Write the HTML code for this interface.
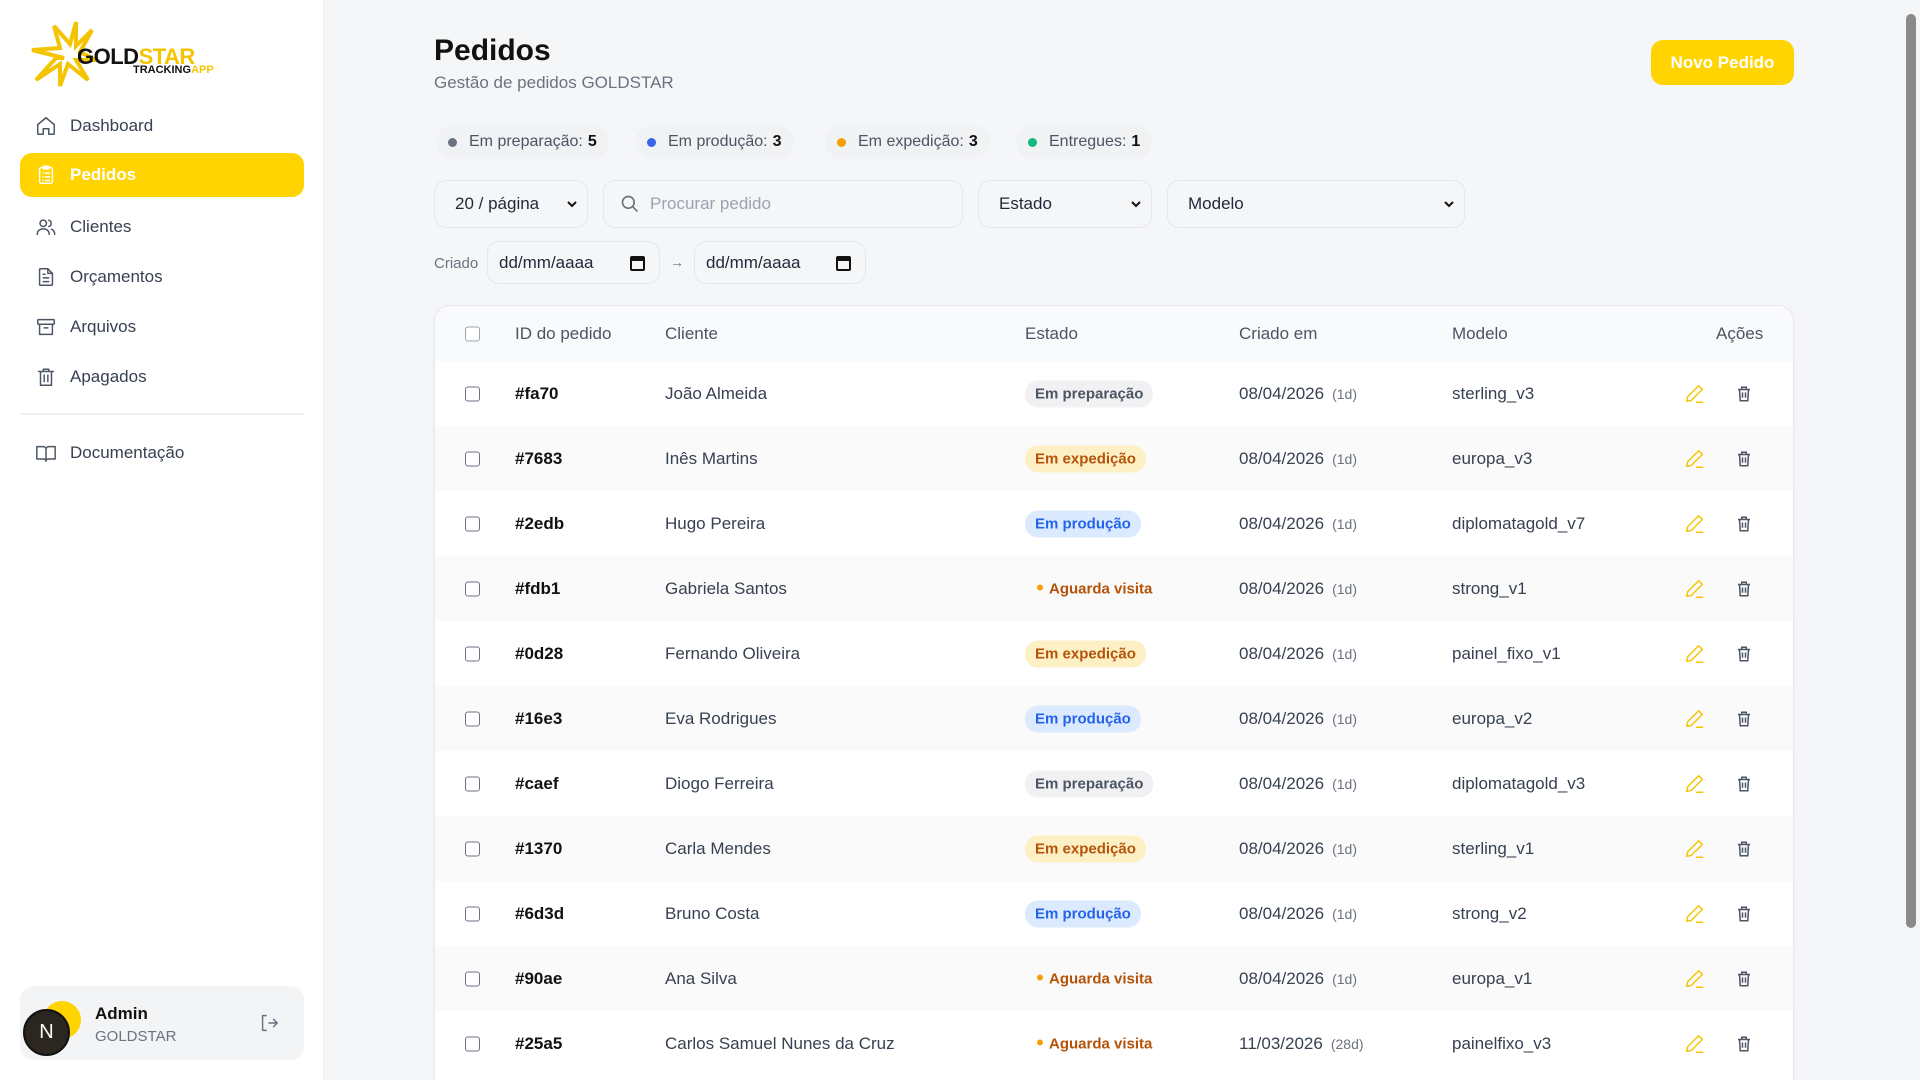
<!DOCTYPE html>
<html style="width:1920px;height:1080px;overflow:hidden"><head><meta charset="utf-8">
<style>
*{box-sizing:border-box;margin:0;padding:0}
html,body{overflow:hidden}
body{width:1920px;height:1080px;overflow:hidden;background:#f5f6f8;font-family:"Liberation Sans",sans-serif;color:#1f2937;position:relative}
.sb{position:absolute;left:0;top:0;width:324px;height:1080px;background:#fff;border-right:1px solid #eceef1}
.nav{position:absolute;left:20px;width:284px;height:44px;display:flex;align-items:center;padding-left:15px;font-size:17px;color:#374151;border-radius:12px}
.nav svg{width:22px;height:22px;margin-right:13px;fill:none;stroke:#4b5563;stroke-width:1.6;stroke-linecap:round;stroke-linejoin:round}
.nav.act{background:#ffd400;color:#fff;font-weight:bold}
.nav.act svg{stroke:#fff}
.abs{position:absolute}
.pill{position:absolute;top:125px;height:34px;border-radius:17px;background:#f1f2f4;display:flex;align-items:center;padding:0 12px;font-size:16px;color:#4b5563;white-space:nowrap}
.pill i{width:9px;height:9px;border-radius:50%;display:inline-block;margin-right:12px}
.pill b{color:#111;margin-left:5px}
.box{position:absolute;border:1px solid #e5e7eb;border-radius:12px;background:#f5f6f8;display:flex;align-items:center;font-size:17px;color:#1f2937}
.chev{position:absolute;right:10px;top:50%;margin-top:-5px;width:10px;height:10px}
.card{position:absolute;left:434px;top:305px;width:1360px;height:775px;background:#fff;border:1px solid #e8e9ec;border-bottom:none;border-radius:16px 16px 0 0;overflow:hidden;box-shadow:0 1px 3px rgba(0,0,0,.05)}
.row{position:absolute;left:0;width:1360px;height:65px;font-size:17px;color:#374151}
.row>*{position:absolute;top:50%;transform:translateY(-50%);white-space:nowrap}
.cb{left:30px;width:15px;height:15px;border:1.5px solid #6b7280;border-radius:3px;background:#fff}
.id{left:80px;font-weight:bold;color:#111}
.cl{left:230px}
.st{left:590px;font-size:15px;font-weight:bold;padding:5px 10px;border-radius:13px}
.prep{background:#f1f1f3;color:#4b5563}
.exp{background:#fdf0c4;color:#b45309}
.prod{background:#dbeafe;color:#2563eb}
.ag{color:#b45309;padding-left:12px}
.ag:before{content:"";display:inline-block;width:6px;height:6px;border-radius:50%;background:#f59e0b;margin-right:6px;vertical-align:middle;position:relative;top:-2px}
.dt{left:804px}
.dt span{color:#6b7280;font-size:14px;margin-left:8px}
.md{left:1017px}
.ed{left:1249px;width:22px;height:22px}
.tr{left:1300px;width:18px;height:18px}
</style></head><body>
<div class="sb">
  <svg class="abs" style="left:30px;top:20px" width="70" height="68" viewBox="0 0 70 68">
    <path d="M34 38 L2 30 L30 28 L24 6 L40 24 L46 2 L46 26 L62 10 L50 32 L66 40 L46 40 L58 60 L38 44 L30 66 L30 44 L6 60 L26 38 Z" fill="none" stroke="#f5c400" stroke-width="4" stroke-linejoin="miter"/>
  </svg>
  <div class="abs" style="left:77px;top:44px;font-size:22px;font-weight:bold;letter-spacing:-0.5px"><span style="color:#111">GOLD</span><span style="color:#f5c400">STAR</span></div>
  <div class="abs" style="left:133px;top:64px;font-size:11px;font-weight:bold"><span style="color:#111">TRACKING</span><span style="color:#f5c400">APP</span></div>

  <div class="nav" style="top:104px"><svg viewBox="0 0 24 24"><path d="M3 10.5 12 3l9 7.5V20a1 1 0 0 1-1 1h-5v-6h-6v6H4a1 1 0 0 1-1-1z"/></svg>Dashboard</div>
  <div class="nav act" style="top:153px"><svg viewBox="0 0 24 24"><rect x="5" y="4" width="14" height="17" rx="2"/><rect x="9" y="2.5" width="6" height="3" rx="1"/><path d="M8.5 10h.01M11 10h5M8.5 14h.01M11 14h5M8.5 18h.01M11 18h5"/></svg>Pedidos</div>
  <div class="nav" style="top:205px"><svg viewBox="0 0 24 24"><circle cx="9" cy="8" r="3.5"/><path d="M2.5 20c0-4 3-6 6.5-6s6.5 2 6.5 6"/><path d="M15 4.6a3.5 3.5 0 0 1 0 6.8M18 14.5c2 .8 3.5 2.6 3.5 5.5"/></svg>Clientes</div>
  <div class="nav" style="top:255px"><svg viewBox="0 0 24 24"><path d="M14 3H6a1 1 0 0 0-1 1v16a1 1 0 0 0 1 1h12a1 1 0 0 0 1-1V8z"/><path d="M14 3v5h5M9 13h6M9 17h6M9 9h2"/></svg>Orçamentos</div>
  <div class="nav" style="top:305px"><svg viewBox="0 0 24 24"><rect x="3" y="4" width="18" height="5" rx="1"/><path d="M5 9v11h14V9M10 13h4"/></svg>Arquivos</div>
  <div class="nav" style="top:355px"><svg viewBox="0 0 24 24"><path d="M4 6h16M9 6V3.5h6V6M6 6v15h12V6M10 10v7M14 10v7"/></svg>Apagados</div>
  <div class="abs" style="left:20px;top:413px;width:284px;height:2px;background:#eef0f2"></div>
  <div class="nav" style="top:431px"><svg viewBox="0 0 24 24"><path d="M2 5h7a3 3 0 0 1 3 3v13a2.5 2.5 0 0 0-2.5-2.5H2zM22 5h-7a3 3 0 0 0-3 3v13a2.5 2.5 0 0 1 2.5-2.5H22z"/></svg>Documentação</div>

  <div class="abs" style="left:20px;top:986px;width:284px;height:74px;background:#f3f4f6;border-radius:14px"></div>
  <div class="abs" style="left:43px;top:1001px;width:38px;height:38px;border-radius:50%;background:#ffd400"></div>
  <div class="abs" style="left:23px;top:1009px;width:47px;height:47px;border-radius:50%;background:#2b2620;border:2px solid #111;color:#fff;font-size:20px;display:flex;align-items:center;justify-content:center">N</div>
  <div class="abs" style="left:95px;top:1004px;font-size:17px;font-weight:bold;color:#111">Admin</div>
  <div class="abs" style="left:95px;top:1028px;font-size:15px;color:#6b7280">GOLDSTAR</div>
  <svg class="abs" style="left:258px;top:1012px" width="22" height="22" viewBox="0 0 24 24" fill="none" stroke="#6b7280" stroke-width="1.6" stroke-linecap="round" stroke-linejoin="round"><path d="M9 4H5v16h4M12 12h9M17 8l4 4-4 4"/></svg>
</div>

<div class="abs" style="left:434px;top:34px;font-size:30px;font-weight:bold;color:#111">Pedidos</div>
<div class="abs" style="left:434px;top:73px;font-size:17px;color:#6b7280">Gestão de pedidos GOLDSTAR</div>
<div class="abs" style="left:1651px;top:40px;width:143px;height:45px;border-radius:12px;background:#ffd400;color:#fff;font-weight:bold;font-size:17px;display:flex;align-items:center;justify-content:center">Novo Pedido</div>

<div class="pill" style="left:436px"><i style="background:#6b7280"></i>Em preparação:<b>5</b></div>
<div class="pill" style="left:635px"><i style="background:#3b63e8"></i>Em produção:<b>3</b></div>
<div class="pill" style="left:825px"><i style="background:#f59e0b"></i>Em expedição:<b>3</b></div>
<div class="pill" style="left:1016px"><i style="background:#10b981"></i>Entregues:<b>1</b></div>

<svg width="0" height="0" style="position:absolute"><defs><path id="cv" d="M1 3l4 4 4-4" fill="none" stroke="#111" stroke-width="2"/></defs></svg>
<div class="box" style="left:434px;top:180px;width:154px;height:48px;padding-left:20px">20 / página<svg class="chev" viewBox="0 0 10 10"><use href="#cv"/></svg></div>
<div class="box" style="left:603px;top:180px;width:360px;height:48px;padding-left:46px;color:#9ca3af">
  <svg class="abs" style="left:16px;top:13px" width="20" height="20" viewBox="0 0 24 24" fill="none" stroke="#6b7280" stroke-width="2"><circle cx="10" cy="10" r="7"/><path d="M15 15l6 6"/></svg>Procurar pedido</div>
<div class="box" style="left:978px;top:180px;width:174px;height:48px;padding-left:20px">Estado<svg class="chev" viewBox="0 0 10 10"><use href="#cv"/></svg></div>
<div class="box" style="left:1167px;top:180px;width:298px;height:48px;padding-left:20px">Modelo<svg class="chev" viewBox="0 0 10 10"><use href="#cv"/></svg></div>

<div class="abs" style="left:434px;top:255px;font-size:15px;color:#6b7280">Criado</div>
<div class="box" style="left:487px;top:241px;width:173px;height:43px;padding-left:11px">dd/mm/aaaa<svg class="abs" style="right:14px;top:13px" width="15" height="16" viewBox="0 0 15 16"><rect x="1" y="2" width="13" height="13" rx="1" fill="none" stroke="#111" stroke-width="2"/><rect x="1" y="2" width="13" height="4" fill="#111"/></svg></div>
<div class="abs" style="left:670px;top:254px;font-size:14px;color:#6b7280">→</div>
<div class="box" style="left:694px;top:241px;width:172px;height:43px;padding-left:11px">dd/mm/aaaa<svg class="abs" style="right:14px;top:13px" width="15" height="16" viewBox="0 0 15 16"><rect x="1" y="2" width="13" height="13" rx="1" fill="none" stroke="#111" stroke-width="2"/><rect x="1" y="2" width="13" height="4" fill="#111"/></svg></div>

<div class="card">
  <div class="row" style="top:0;height:55px;background:#f9fafb;color:#4b5563;font-size:17px">
    <div class="cb" style="border-color:#9ca3af"></div><div class="id" style="color:#4b5563;font-weight:normal">ID do pedido</div><div class="cl">Cliente</div><div style="left:590px">Estado</div><div style="left:804px">Criado em</div><div style="left:1017px">Modelo</div><div style="left:1281px">Ações</div>
  </div>
  <div id="rows"></div>
</div>

<div class="abs" style="left:1903px;top:0;width:17px;height:1080px;background:#f5f6f8"></div>
<div class="abs" style="left:1906px;top:14px;width:10px;height:914px;border-radius:5px;background:#8a8a8a"></div>

<script>
var d=[["#fa70","João Almeida","prep","Em preparação","08/04/2026","1d","sterling_v3"],
["#7683","Inês Martins","exp","Em expedição","08/04/2026","1d","europa_v3"],
["#2edb","Hugo Pereira","prod","Em produção","08/04/2026","1d","diplomatagold_v7"],
["#fdb1","Gabriela Santos","ag","Aguarda visita","08/04/2026","1d","strong_v1"],
["#0d28","Fernando Oliveira","exp","Em expedição","08/04/2026","1d","painel_fixo_v1"],
["#16e3","Eva Rodrigues","prod","Em produção","08/04/2026","1d","europa_v2"],
["#caef","Diogo Ferreira","prep","Em preparação","08/04/2026","1d","diplomatagold_v3"],
["#1370","Carla Mendes","exp","Em expedição","08/04/2026","1d","sterling_v1"],
["#6d3d","Bruno Costa","prod","Em produção","08/04/2026","1d","strong_v2"],
["#90ae","Ana Silva","ag","Aguarda visita","08/04/2026","1d","europa_v1"],
["#25a5","Carlos Samuel Nunes da Cruz","ag","Aguarda visita","11/03/2026","28d","painelfixo_v3"]];
var h="";
d.forEach(function(r,i){
h+='<div class="row" style="top:'+(55+65*i)+'px;background:'+(i%2?'#fafafa':'#fff')+'"><div class="cb"></div><div class="id">'+r[0]+'</div><div class="cl">'+r[1]+'</div><div class="st '+r[2]+'">'+r[3]+'</div><div class="dt">'+r[4]+'<span>('+r[5]+')</span></div><div class="md">'+r[6]+'</div>'+
'<svg class="ed" viewBox="0 0 24 24" fill="none" stroke="#f5c400" stroke-width="1.6" stroke-linejoin="round"><path d="M16 3l4 4L8 19l-5 1 1-5z"/><path d="M13 21h8"/></svg>'+
'<svg class="tr" viewBox="0 0 24 24" fill="none" stroke="#4b5563" stroke-width="2"><path d="M4 6h16M9 6V3h6v3M6 6l1 15h10l1-15M10 10v7M14 10v7"/></svg></div>';});
document.getElementById("rows").innerHTML=h;
</script>
</body></html>
